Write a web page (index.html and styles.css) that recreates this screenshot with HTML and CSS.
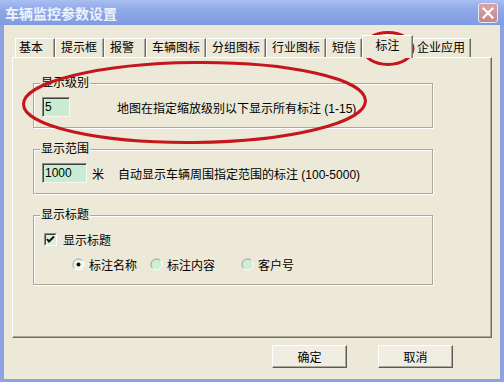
FILE: index.html
```html
<!DOCTYPE html>
<html lang="zh-CN">
<head>
    <meta charset="UTF-8">
    <title>车辆监控参数设置</title>
    <link rel="stylesheet" href="styles.css">
</head>
<body>

    <div class="window">
        <div class="titlebar">
            <span class="title">车辆监控参数设置</span>
            <span class="close">
                <svg width="12" height="12" viewBox="0 0 12 12">
                    <path d="M1.5 1.5 L10.5 10.5 M10.5 1.5 L1.5 10.5" stroke="#fff" stroke-width="2.2" stroke-linecap="square"/>
                </svg>
            </span>
        </div>

        <div class="client">
            <div class="tabs">
                <div class="tab">基本</div>
                <div class="tab">提示框</div>
                <div class="tab">报警</div>
                <div class="tab">车辆图标</div>
                <div class="tab">分组图标</div>
                <div class="tab">行业图标</div>
                <div class="tab">短信</div>
                <div class="tab active">标注</div>
                <div class="tab">企业应用</div>
            </div>

            <div class="panel">
                <fieldset class="group">
                    <legend>显示级别</legend>
                    <div class="row">
                        <input type="text" class="field field-level" value="5">
                        <span class="hint-level">地图在指定缩放级别以下显示所有标注 (1-15)</span>
                    </div>
                </fieldset>

                <fieldset class="group">
                    <legend>显示范围</legend>
                    <div class="row">
                        <input type="text" class="field field-range" value="1000">
                        <span class="unit">米</span>
                        <span class="hint-range">自动显示车辆周围指定范围的标注 (100-5000)</span>
                    </div>
                </fieldset>

                <fieldset class="group">
                    <legend>显示标题</legend>
                    <div class="row check-row">
                        <svg class="checkbox" width="13" height="13" viewBox="0 0 13 13">
                            <rect x="0" y="0" width="13" height="13" fill="#fff"/>
                            <rect x="1" y="1" width="11" height="11" fill="#d9f0dc"/>
                            <path d="M0.5 12.5 V0.5 H12.5" stroke="#8a8a82" fill="none"/>
                            <path d="M1.5 11.5 V1.5 H11.5" stroke="#404040" fill="none"/>
                            <path d="M3 6 L5 8.5 L10 3.5" stroke="#111" stroke-width="2" fill="none"/>
                        </svg>
                        <span class="check-label">显示标题</span>
                    </div>
                    <div class="row radio-row">
                        <div class="radio">
                            <svg width="13" height="13" viewBox="0 0 13 13">
                                <circle cx="6.5" cy="6.5" r="5.5" fill="#eef6ee"/>
                                <path d="M2.6 10.4 A5.5 5.5 0 0 1 10.4 2.6" stroke="#9a9a92" fill="none"/>
                                <path d="M10.4 2.6 A5.5 5.5 0 0 1 2.6 10.4" stroke="#fff" fill="none"/>
                                <circle cx="6.5" cy="6.5" r="2" fill="#111"/>
                            </svg>
                            <span>标注名称</span>
                        </div>
                        <div class="radio">
                            <svg width="13" height="13" viewBox="0 0 13 13">
                                <circle cx="6.5" cy="6.5" r="5.5" fill="#cfeed6"/>
                                <path d="M2.6 10.4 A5.5 5.5 0 0 1 10.4 2.6" stroke="#9a9a92" fill="none"/>
                                <path d="M10.4 2.6 A5.5 5.5 0 0 1 2.6 10.4" stroke="#fff" fill="none"/>
                            </svg>
                            <span>标注内容</span>
                        </div>
                        <div class="radio">
                            <svg width="13" height="13" viewBox="0 0 13 13">
                                <circle cx="6.5" cy="6.5" r="5.5" fill="#cfeed6"/>
                                <path d="M2.6 10.4 A5.5 5.5 0 0 1 10.4 2.6" stroke="#9a9a92" fill="none"/>
                                <path d="M10.4 2.6 A5.5 5.5 0 0 1 2.6 10.4" stroke="#fff" fill="none"/>
                            </svg>
                            <span>客户号</span>
                        </div>
                    </div>
                </fieldset>
            </div>

            <div class="buttons">
                <button class="btn">确定</button>
                <button class="btn">取消</button>
            </div>
        </div>
    </div>

    <!-- red marks drawn on the screenshot -->
    <svg class="marks" width="504" height="382" viewBox="0 0 504 382">
        <ellipse cx="388" cy="48.5" rx="25" ry="16" fill="none" stroke="#c4161c" stroke-width="3"/>
        <ellipse cx="194.5" cy="102.5" rx="171" ry="40" fill="none" stroke="#c4161c" stroke-width="3" transform="rotate(-0.6 194.5 102.5)"/>
    </svg>

</body>
</html>
```

FILE: styles.css
```css
body {
    margin: 0;
    font-family: "Liberation Sans", "Noto Sans CJK SC", sans-serif;
    font-size: 12px;
    color: #000;
    position: relative;
    width: 504px;
    height: 382px;
    overflow: hidden;
}
.window {
    width: 504px;
    height: 382px;
    box-sizing: border-box;
    display: flex;
    flex-direction: column;
    background: #8ca2e2;
    padding: 0 4px 3px 4px;
}
.titlebar {
    height: 25px;
    margin: 0 -4px;
    padding: 0 6px 0 5px;
    display: flex;
    align-items: center;
    justify-content: space-between;
    background: linear-gradient(to bottom, #aabff2 0, #91aae8 35%, #7f9be0 100%);
}
.title {
    color: #eef2fc;
    font-weight: bold;
    font-size: 14px;
    font-family: "Noto Sans CJK SC", sans-serif;
}
.close {
    width: 20px;
    height: 20px;
    box-sizing: border-box;
    border: 1px solid #e4e8f6;
    border-radius: 3px;
    background: linear-gradient(to bottom, #d8a3a6, #c4878d);
    display: flex;
    align-items: center;
    justify-content: center;
}
.client {
    flex: 1;
    background: #ece9d8;
    padding-top: 10px;
    display: flex;
    flex-direction: column;
}
.tabs {
    display: flex;
    align-items: flex-end;
    height: 22px;
    margin: 0 8px;
    padding-left: 3px;
}
.tab {
    box-sizing: border-box;
    height: 19px;
    line-height: 18px;
    padding-left: 5px;
    border-top: 1px solid #fff;
    border-left: 1px solid #fff;
    border-right: 1px solid #716f64;
    box-shadow: inset -1px 0 #aca899;
    white-space: nowrap;
}
.tab:nth-child(1) { width: 40px; padding-left: 3px; }
.tab:nth-child(2) { width: 49px; }
.tab:nth-child(3) { width: 42px; }
.tab:nth-child(4) { width: 60px; }
.tab:nth-child(5) { width: 60px; }
.tab:nth-child(6) { width: 60px; }
.tab:nth-child(7) { width: 36px; }
.tab:nth-child(9) { width: 58px; padding-left: 3px; }
.tab.active {
    width: 51px;
    height: 23px;
    line-height: 20px;
    padding-left: 0;
    text-align: center;
    margin-bottom: -1px;
    background: #ece9d8;
    position: relative;
    z-index: 1;
}
.panel {
    height: 281px;
    box-sizing: border-box;
    margin: 0 8px;
    padding: 18px 0 0 20px;
    border-top: 1px solid #fff;
    border-left: 1px solid #fff;
    border-right: 1px solid #716f64;
    border-bottom: 1px solid #716f64;
    box-shadow: inset -1px -1px #aca899;
}
.group {
    width: 400px;
    box-sizing: border-box;
    margin: 0 0 14px 0;
    padding: 7px 10px 10px 8px;
    border: 1px solid #aca899;
    box-shadow: 1px 1px 0 #fff, inset 1px 1px 0 #fff;
}
.group legend {
    padding: 0 1px;
    margin-left: -2px;
    line-height: 14px;
    background: #ece9d8;
}
.row {
    display: flex;
    align-items: center;
    height: 20px;
}
.field {
    box-sizing: border-box;
    height: 20px;
    padding: 0 2px;
    margin: 0;
    font: inherit;
    border: 1px solid;
    border-color: #8a8a80 #f6f6f2 #f6f6f2 #8a8a80;
    box-shadow: inset 1px 1px #404040;
    background: #c9edd2;
    outline: none;
}
.field-level { width: 28px; }
.field-range { width: 45px; }
.hint-level { margin-left: 47px; }
.unit { margin-left: 5px; }
.hint-range { margin-left: 14px; }
.check-row { padding-left: 2px; }
.check-label { margin-left: 6px; }
.radio-row {
    margin-top: 5px;
    padding-left: 30px;
}
.radio {
    display: flex;
    align-items: center;
    gap: 4px;
}
.radio:nth-child(1) { width: 78px; }
.radio:nth-child(2) { width: 91px; }
.buttons {
    display: flex;
    justify-content: flex-end;
    gap: 31px;
    margin-top: 7px;
    padding-right: 47px;
}
.btn {
    width: 75px;
    height: 23px;
    font: inherit;
    padding: 0;
    background: #f0eee3;
    border: 1px solid;
    border-color: #fff #5d5b52 #5d5b52 #fff;
    box-shadow: inset -1px -1px #aca899;
    color: #000;
}
.marks {
    position: absolute;
    top: 0;
    left: 0;
    pointer-events: none;
}
```
